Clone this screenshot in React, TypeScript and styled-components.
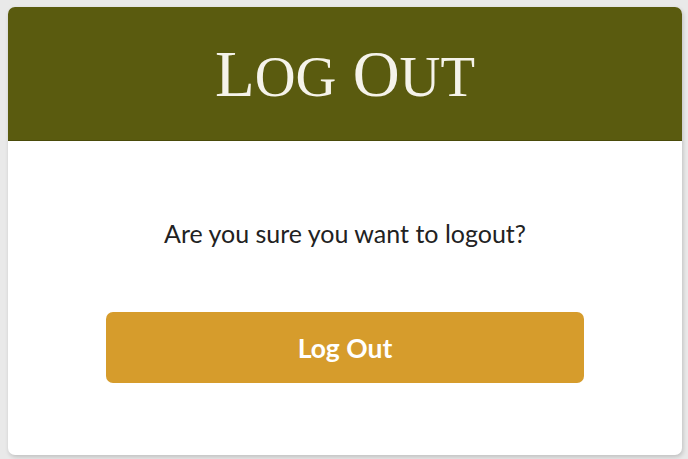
import React from "react";
import styled, { createGlobalStyle } from "styled-components";

const Global = createGlobalStyle`
  html, body { margin: 0; padding: 0; background: #e9e9e9; }
  body { padding: 7px 6px 4px 8px; font-family: Lato, "Noto Sans", sans-serif; }
`;

const Card = styled.div`
  background: #ffffff;
  border-radius: 7px;
  overflow: hidden;
  box-shadow: 1px 2px 4px rgba(0, 0, 0, 0.18);
  height: 448px;
  display: flex;
  flex-direction: column;
`;

const Header = styled.header`
  background: #5a5b0f;
  height: 134px;
  border-bottom: 1px solid #4a4b0a;
  box-sizing: border-box;
  display: flex;
  align-items: center;
  justify-content: center;
`;

const Title = styled.h1`
  margin: 0;
  color: #f5f3ea;
  font-family: "Liberation Serif", "DejaVu Serif", serif;
  font-weight: 400;
  font-size: 65px;
  letter-spacing: 0;
  line-height: 1;
  padding-top: 1px;
`;

const SmallCaps = styled.span`
  font-size: 0.87em;
  text-transform: uppercase;
`;

const Body = styled.div`
  flex: 1;
  display: flex;
  flex-direction: column;
  align-items: center;
  padding: 77px 98px 0;
`;

const Message = styled.p`
  margin: 0;
  font-size: 25px;
  color: #222222;
  line-height: 30px;
`;

const Button = styled.button`
  margin-top: 64px;
  width: 100%;
  height: 71px;
  border: none;
  border-radius: 7px;
  background: #d69c2c;
  color: #ffffff;
  font-family: Lato, "Noto Sans", sans-serif;
  font-weight: 700;
  font-size: 26.5px;
  cursor: pointer;
`;

export default function App() {
  return (
    <>
      <Global />
      <Card>
        <Header>
          <Title>
            L<SmallCaps>og</SmallCaps> O<SmallCaps>ut</SmallCaps>
          </Title>
        </Header>
        <Body>
          <Message>Are you sure you want to logout?</Message>
          <Button>Log Out</Button>
        </Body>
      </Card>
    </>
  );
}
